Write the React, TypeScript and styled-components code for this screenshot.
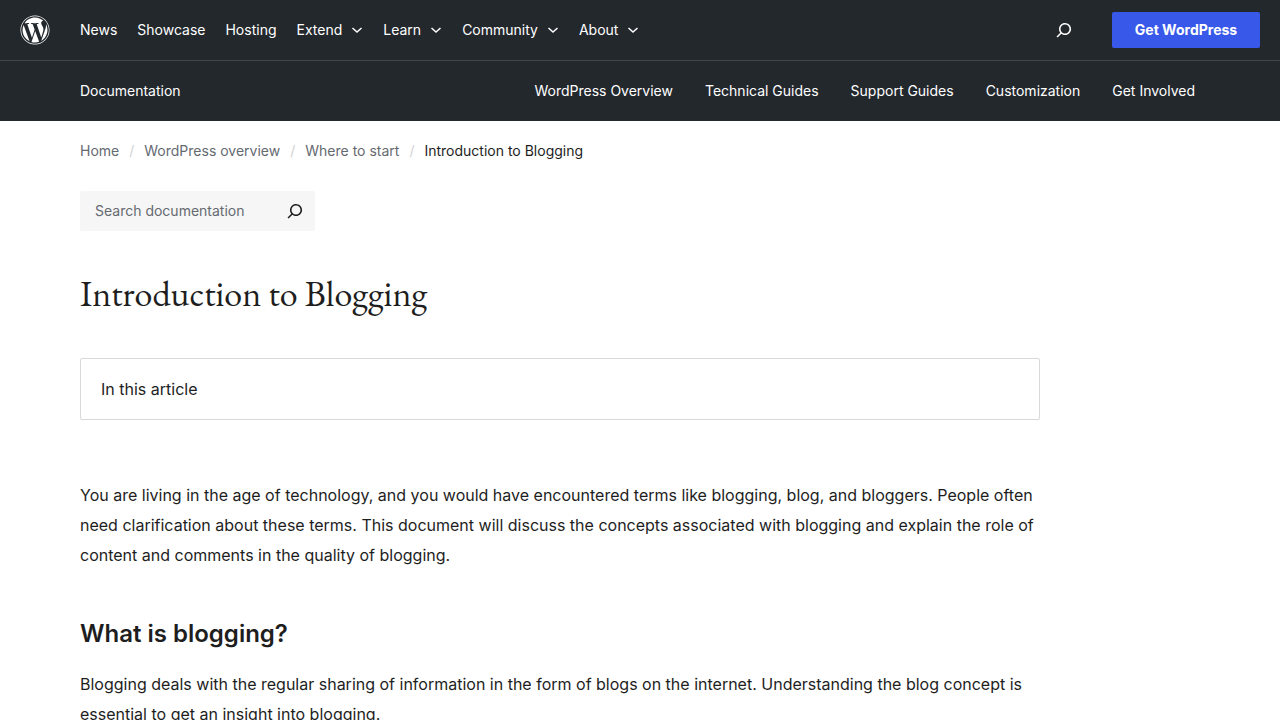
import React from "react";
import styled, { createGlobalStyle } from "styled-components";
import { FaWordpress } from "react-icons/fa";

const GlobalStyle = createGlobalStyle`
  *, *::before, *::after { box-sizing: border-box; }
  body {
    margin: 0;
    background: #fff;
    color: #1e1e1e;
    font-family: Inter, "Liberation Sans", sans-serif;
    font-size: 16px;
    line-height: 30px;
  }
  a { color: inherit; text-decoration: none; }
  h1, h2, p, ul, ol { margin: 0; padding: 0; }
  ul, ol { list-style: none; }
`;

const Header = styled.header`
  background: #23282d;
  color: #fff;
  font-size: 14px;
  line-height: 24px;
`;

const GlobalBar = styled.div`
  display: flex;
  align-items: center;
  height: 60px;
  padding: 0 20px;
`;

const Logo = styled.a`
  display: flex;
  width: 60px;
  font-size: 30px;
`;

const NavList = styled.ul<{ $gap: number }>`
  display: flex;
  align-items: center;
  gap: ${(p) => p.$gap}px;
  white-space: nowrap;
`;

const MenuButton = styled.button`
  display: flex;
  align-items: center;
  gap: 9px;
  padding: 0;
  border: 0;
  background: none;
  color: inherit;
  font: inherit;
  cursor: pointer;
`;

const Actions = styled.div`
  display: flex;
  align-items: center;
  gap: 36px;
  margin-left: auto;
`;

const IconButton = styled.button`
  display: flex;
  padding: 0;
  border: 0;
  background: none;
  color: inherit;
  cursor: pointer;
`;

const GetButton = styled.a`
  width: 148px;
  padding: 6px 0;
  border-radius: 2px;
  background: #3858e9;
  font-weight: 700;
  text-align: center;
  white-space: nowrap;
`;

const LocalBar = styled.nav`
  display: flex;
  align-items: center;
  justify-content: space-between;
  height: 61px;
  padding: 0 85px 0 80px;
  border-top: 1px solid #40464d;
`;

const Main = styled.main`
  padding: 18px 80px 60px;
`;

const Crumbs = styled.ol`
  display: flex;
  font-size: 14px;
  line-height: 24px;
  color: #656a71;
`;

const Crumb = styled.li`
  &:not(:first-child)::before {
    content: "/";
    margin: 0 10px;
    color: #d0d2d5;
  }
  &:last-child { color: #1e1e1e; }
`;

const SearchForm = styled.form`
  display: flex;
  align-items: center;
  width: 235px;
  height: 40px;
  margin-top: 28px;
  padding: 0 8px 0 15px;
  border-radius: 2px;
  background: #f6f6f6;
`;

const SearchInput = styled.input`
  flex: 1;
  min-width: 0;
  padding: 0;
  border: 0;
  outline: 0;
  background: none;
  color: #1e1e1e;
  font: inherit;
  font-size: 14px;
  line-height: 24px;
  &::placeholder { color: #656a71; opacity: 1; }
`;

const Title = styled.h1`
  margin-top: 38px;
  font-family: "EB Garamond", "Liberation Serif", serif;
  font-size: 36px;
  font-weight: 400;
  line-height: 50px;
`;

const Article = styled.article`
  max-width: 960px;
`;

const Contents = styled.section`
  margin: 39px 0 60px;
  padding: 15px 20px;
  border: 1px solid #d9d9d9;
  border-radius: 2px;
`;

const Subtitle = styled.h2`
  margin: 48px 0 20px;
  font-size: 24px;
  font-weight: 600;
  line-height: 31px;
`;

const SearchIcon = () => (
  <svg width="24" height="24" viewBox="0 0 24 24" fill="currentColor" aria-hidden="true">
    <path d="M13 5c-3.3 0-6 2.7-6 6 0 1.4.5 2.7 1.3 3.7l-3.8 3.8 1.1 1.1 3.8-3.8c1 .8 2.3 1.3 3.7 1.3 3.3 0 6-2.7 6-6S16.3 5 13 5zm0 10.5c-2.5 0-4.5-2-4.5-4.5s2-4.5 4.5-4.5 4.5 2 4.5 4.5-2 4.5-4.5 4.5z" />
  </svg>
);

const Chevron = () => (
  <svg width="12" height="12" viewBox="0 0 12 12" fill="none" stroke="currentColor" strokeWidth="1.5" aria-hidden="true">
    <path d="M1.5 4L6 8l4.5-4" />
  </svg>
);

const links = ["News", "Showcase", "Hosting"];
const menus = ["Extend", "Learn", "Community", "About"];
const guides = ["WordPress Overview", "Technical Guides", "Support Guides", "Customization", "Get Involved"];
const trail = ["Home", "WordPress overview", "Where to start"];

export default function App() {
  return (
    <>
      <GlobalStyle />
      <Header>
        <GlobalBar>
          <Logo href="#" aria-label="WordPress.org"><FaWordpress /></Logo>
          <nav aria-label="Global">
            <NavList $gap={20}>
              {links.map((l) => <li key={l}><a href="#">{l}</a></li>)}
              {menus.map((m) => (
                <li key={m}><MenuButton type="button">{m}<Chevron /></MenuButton></li>
              ))}
            </NavList>
          </nav>
          <Actions>
            <IconButton type="button" aria-label="Open search"><SearchIcon /></IconButton>
            <GetButton href="#">Get WordPress</GetButton>
          </Actions>
        </GlobalBar>
        <LocalBar aria-label="Documentation">
          <a href="#">Documentation</a>
          <NavList $gap={32}>
            {guides.map((g) => <li key={g}><a href="#">{g}</a></li>)}
          </NavList>
        </LocalBar>
      </Header>
      <Main>
        <nav aria-label="Breadcrumbs">
          <Crumbs>
            {trail.map((t) => <Crumb key={t}><a href="#">{t}</a></Crumb>)}
            <Crumb aria-current="page">Introduction to Blogging</Crumb>
          </Crumbs>
        </nav>
        <SearchForm role="search">
          <SearchInput type="search" aria-label="Search documentation" placeholder="Search documentation" />
          <IconButton type="submit" aria-label="Search"><SearchIcon /></IconButton>
        </SearchForm>
        <Article>
          <Title>Introduction to Blogging</Title>
          <Contents aria-label="Table of contents">
            <p>In this article</p>
          </Contents>
          <p>
            You are living in the age of technology, and you would have encountered terms like blogging, blog, and
            bloggers. People often need clarification about these terms. This document will discuss the concepts
            associated with blogging and explain the role of content and comments in the quality of blogging.
          </p>
          <Subtitle>What is blogging?</Subtitle>
          <p>
            Blogging deals with the regular sharing of information in the form of blogs on the internet. Understanding
            the blog concept is essential to get an insight into blogging.
          </p>
        </Article>
      </Main>
    </>
  );
}
